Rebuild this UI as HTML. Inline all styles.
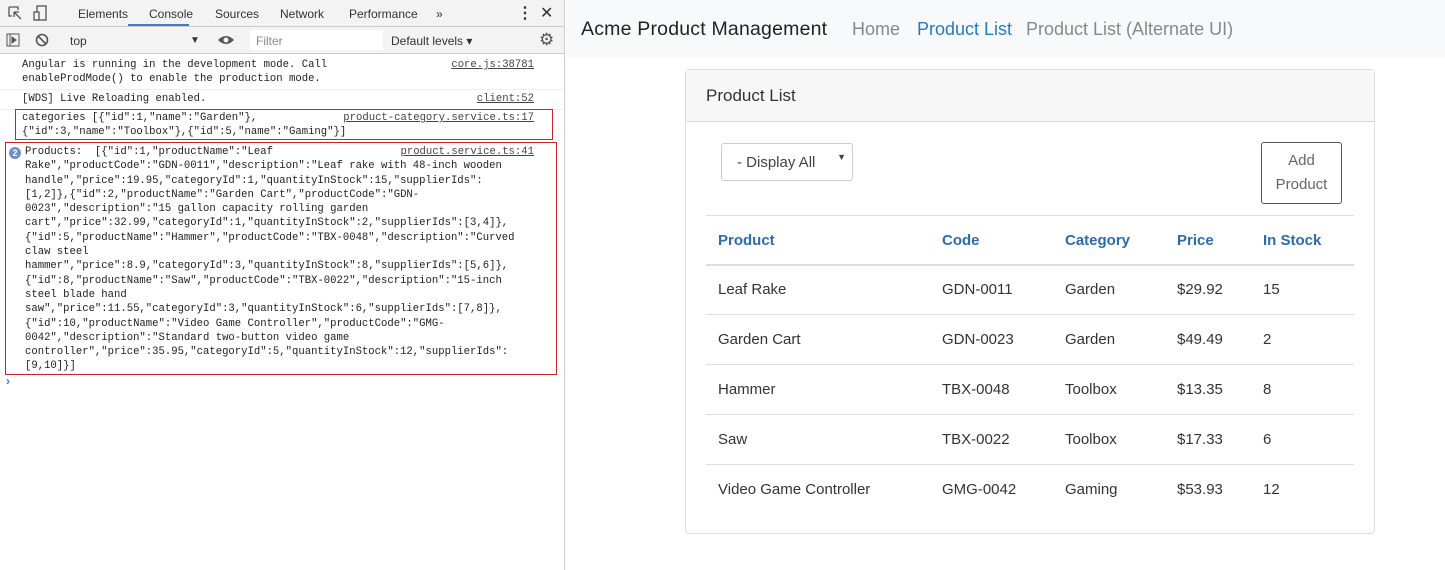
<!DOCTYPE html>
<html><head><meta charset="utf-8"><style>
*{box-sizing:border-box;margin:0;padding:0}
body{width:1445px;height:570px;overflow:hidden;background:#fff;font-family:"Liberation Sans",sans-serif;position:relative}
#dev{position:absolute;left:0;top:0;width:565px;height:570px;border-right:1px solid #ccc;background:#fff}
.tb{position:absolute;left:0;width:564px;height:27px;background:#f3f3f3;border-bottom:1px solid #ccc;font-size:12px;color:#333}
.tb span{position:absolute;top:7px}
.mono{font-family:"Liberation Mono",monospace;font-size:10.6px;line-height:14.3px;color:#222;white-space:pre}
.msg{position:absolute;left:0;width:564px;border-bottom:1px solid #eee}
.lnk{position:absolute;right:30px;text-decoration:underline;color:#444;font-family:"Liberation Mono",monospace;font-size:10.6px;line-height:14.3px}
#app{position:absolute;left:566px;top:0;right:0;bottom:0}
.nav{height:58px;background:#f8f9fa;position:relative;font-size:18px}
.nav span{position:absolute;top:19px}
.card{position:absolute;left:119px;top:69px;width:690px;height:465px;border:1px solid #ddd;border-radius:4px}
.ch{height:52px;background:#f7f7f7;border-bottom:1px solid #ddd;font-size:17px;color:#333;padding:16px 20px}
table{position:absolute;left:20px;top:145px;width:648px;border-collapse:collapse;font-size:15px;color:#333}
td,th{text-align:left;height:50px;border-top:1px solid #ddd;padding-left:12px}
th{color:#2f6ba5;font-weight:bold;border-bottom:2px solid #ddd;height:49px;padding-top:2px}
</style></head><body>
<div id="dev">
 <div class="tb" style="top:0">
  <svg style="position:absolute;left:8px;top:6px" width="14" height="14"><path d="M1 1h9v3M1 1v9h3M6 6l7 7M6 6v5M6 6h5" stroke="#555" fill="none" stroke-width="1.3"/></svg>
  <svg style="position:absolute;left:33px;top:5px" width="14" height="16"><rect x="4" y="1" width="9" height="14" stroke="#555" fill="none" stroke-width="1.3"/><rect x="1" y="7" width="5" height="8" stroke="#555" fill="#f3f3f3" stroke-width="1.3"/></svg>
  <span style="left:78px">Elements</span><span style="left:149px">Console</span><span style="left:215px">Sources</span><span style="left:280px">Network</span><span style="left:349px">Performance</span><span style="left:436px">»</span>
  <div style="position:absolute;left:128px;top:24px;width:61px;height:2px;background:#3b7bd4"></div>
  <span style="left:517px;top:3px;font-size:16px;font-weight:bold">⋮</span><span style="left:540px;top:3px;font-size:16px">✕</span>
 </div>
 <div class="tb" style="top:27px">
  <svg style="position:absolute;left:6px;top:6px" width="14" height="14"><rect x="1" y="1" width="12" height="12" stroke="#555" fill="none"/><path d="M4 1v12M6 4l4 3-4 3z" stroke="#555" fill="#555"/></svg>
  <svg style="position:absolute;left:35px;top:6px" width="14" height="14"><circle cx="7" cy="7" r="5.5" stroke="#555" fill="none" stroke-width="1.6"/><path d="M3 3l8 8" stroke="#555" stroke-width="1.6"/></svg>
  <span style="left:70px">top</span><span style="left:190px;font-size:10px;top:8px">▼</span>
  <svg style="position:absolute;left:217px;top:7px" width="18" height="12"><path d="M1 6Q9-2 17 6Q9 14 1 6z" fill="#555"/><circle cx="9" cy="6" r="2.5" fill="#f3f3f3"/></svg>
  <div style="position:absolute;left:250px;top:3px;width:133px;height:20px;background:#fff"></div>
  <span style="left:256px;color:#888">Filter</span><span style="left:391px">Default levels ▾</span>
  <span style="left:539px;top:3px;font-size:17px;color:#555">⚙</span>
 </div>
 <div class="msg" style="top:54px;height:36px"><div class="mono" style="position:absolute;left:22px;top:4px">Angular is running in the development mode. Call
enableProdMode() to enable the production mode.</div><div class="lnk" style="top:4px">core.js:38781</div></div>
 <div class="msg" style="top:90px;height:20px"><div class="mono" style="position:absolute;left:22px;top:2px">[WDS] Live Reloading enabled.</div><div class="lnk" style="top:2px">client:52</div></div>
 <div style="position:absolute;left:15px;top:109px;width:538px;height:31px;border:1px solid #c0262b"></div>
 <div class="mono" style="position:absolute;left:22px;top:111px">categories [{"id":1,"name":"Garden"},
{"id":3,"name":"Toolbox"},{"id":5,"name":"Gaming"}]</div><div class="lnk" style="top:111px">product-category.service.ts:17</div>
 <div style="position:absolute;left:5px;top:142px;width:552px;height:233px;border:1px solid #c0262b"></div>
 <div style="position:absolute;left:9px;top:147px;width:12px;height:12px;border-radius:6px;background:#6f8fc5;color:#fff;font-size:9px;font-weight:bold;text-align:center;line-height:12px">2</div>
 <div class="mono" style="position:absolute;left:25px;top:145px">Products:  [{"id":1,"productName":"Leaf
Rake","productCode":"GDN-0011","description":"Leaf rake with 48-inch wooden
handle","price":19.95,"categoryId":1,"quantityInStock":15,"supplierIds":
[1,2]},{"id":2,"productName":"Garden Cart","productCode":"GDN-
0023","description":"15 gallon capacity rolling garden
cart","price":32.99,"categoryId":1,"quantityInStock":2,"supplierIds":[3,4]},
{"id":5,"productName":"Hammer","productCode":"TBX-0048","description":"Curved
claw steel
hammer","price":8.9,"categoryId":3,"quantityInStock":8,"supplierIds":[5,6]},
{"id":8,"productName":"Saw","productCode":"TBX-0022","description":"15-inch
steel blade hand
saw","price":11.55,"categoryId":3,"quantityInStock":6,"supplierIds":[7,8]},
{"id":10,"productName":"Video Game Controller","productCode":"GMG-
0042","description":"Standard two-button video game
controller","price":35.95,"categoryId":5,"quantityInStock":12,"supplierIds":
[9,10]}]</div><div class="lnk" style="top:145px">product.service.ts:41</div>
 <div style="position:absolute;left:6px;top:374px;color:#3b7bd4;font-size:12px;font-weight:bold">›</div>
</div>
<div id="app">
 <div class="nav"><span style="left:15px;color:#222;font-size:19.5px;top:18px;letter-spacing:0.2px">Acme Product Management</span><span style="left:286px;color:#888">Home</span><span style="left:351px;color:#2a7ab8">Product List</span><span style="left:460px;color:#888">Product List (Alternate UI)</span></div>
 <div class="card">
  <div class="ch">Product List</div>
  <div style="position:absolute;left:35px;top:73px;width:132px;height:38px;border:1px solid #ccc;border-radius:3px;font-size:15px;color:#444;padding:10px 0 0 15px">- Display All<span style="position:absolute;right:6px;top:8px;font-size:9px">▼</span></div>
  <div style="position:absolute;left:575px;top:72px;width:81px;height:62px;border:1px solid #555;border-radius:3px;font-size:15px;color:#666;text-align:center;line-height:24px;padding-top:6px">Add<br>Product</div>
  <table>
   <tr><th style="width:224px">Product</th><th style="width:123px">Code</th><th style="width:112px">Category</th><th style="width:86px">Price</th><th>In Stock</th></tr>
   <tr><td>Leaf Rake</td><td>GDN-0011</td><td>Garden</td><td>$29.92</td><td>15</td></tr>
   <tr><td>Garden Cart</td><td>GDN-0023</td><td>Garden</td><td>$49.49</td><td>2</td></tr>
   <tr><td>Hammer</td><td>TBX-0048</td><td>Toolbox</td><td>$13.35</td><td>8</td></tr>
   <tr><td>Saw</td><td>TBX-0022</td><td>Toolbox</td><td>$17.33</td><td>6</td></tr>
   <tr><td>Video Game Controller</td><td>GMG-0042</td><td>Gaming</td><td>$53.93</td><td>12</td></tr>
  </table>
 </div>
</div>
</body></html>
